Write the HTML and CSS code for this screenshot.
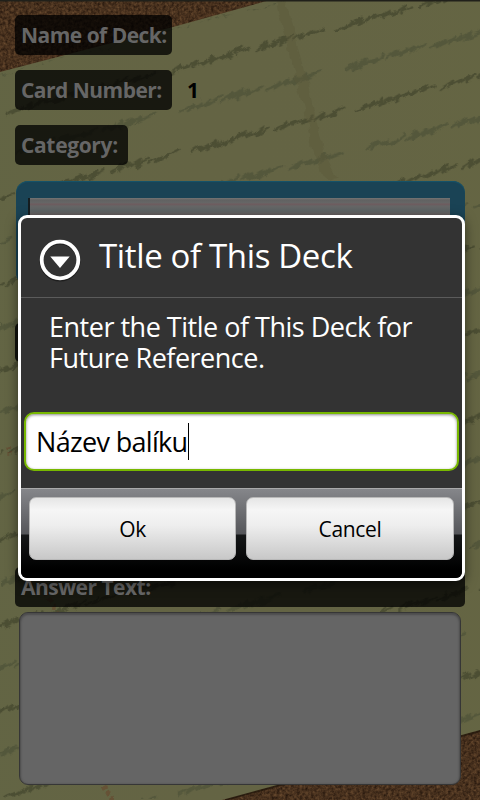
FILE: index.html
```html
<!DOCTYPE html>
<html lang="en">
<head>
<meta charset="utf-8">
<title>Title of This Deck</title>
<link rel="stylesheet" href="styles.css">
</head>
<body>
<main class="screen">
  <svg class="backdrop" width="480" height="800" viewBox="0 0 480 800" aria-hidden="true">
    <defs>
      <filter id="cork" x="0" y="0" width="100%" height="100%" color-interpolation-filters="sRGB">
        <feTurbulence type="fractalNoise" baseFrequency=".35" numOctaves="3" seed="4"/>
        <feColorMatrix values=".34 0 0 0 .11  .26 0 0 0 .06  .17 0 0 0 .03  0 0 0 0 1"/>
      </filter>
      <filter id="rough" x="0" y="0" width="480" height="800" filterUnits="userSpaceOnUse" color-interpolation-filters="sRGB">
        <feTurbulence type="fractalNoise" baseFrequency=".06 .09" numOctaves="2" seed="8"/>
        <feDisplacementMap in="SourceGraphic" scale="9" xChannelSelector="R" yChannelSelector="G"/>
        <feGaussianBlur stdDeviation=".6"/>
      </filter>
      <pattern id="ruling" width="170" height="82.6" patternUnits="userSpaceOnUse" patternTransform="translate(0 93) rotate(-14.4)">
        <g fill="none" stroke-linecap="round">
          <path stroke="#42452c" stroke-opacity=".7" stroke-width="2.2" d="M0 23l12-4-5 4 13-4-6 4 16-6-7 6 14-4M34 22l12-4-5 5 17-6-8 5 14-4-5 4 17-6-8 6 14-4M88 22l14-5-7 6 15-5-5 4 15-5-7 6 14-5M127 22l13-5-7 6 17-5-6 4 15-5"/>
          <path stroke="#464c34" stroke-opacity=".55" stroke-width="2.6" d="M0 63l15-5-9 7 18-7-8 6 17-5-7 5 16-6M42 63l14-5-8 6 18-6-9 6 16-5-6 5 18-6M90 63l15-5-9 6 18-6-7 6 16-5-8 5 17-6-6 5 20-3"/>
        </g>
      </pattern>
      <linearGradient id="shade"><stop offset="0" stop-color="#5f6744" stop-opacity=".25"/><stop offset=".5" stop-color="#656544" stop-opacity="0"/><stop offset="1" stop-color="#666840" stop-opacity=".25"/></linearGradient>
    </defs>
    <rect width="480" height="800" filter="url(#cork)"/>
    <path fill="#20150a" opacity=".7" d="M480 732L225 801V795L480 727z"/>
    <path fill="#646444" d="M0 72L173 27 270 0H480V730L222 800H0z"/>
    <path fill="url(#shade)" d="M0 72L173 27 270 0H480V730L222 800H0z"/>
    <g filter="url(#rough)">
      <path fill="url(#ruling)" d="M0 74L285 0H490V728L222 799H0z"/>
      <path fill="none" stroke="#59583a" stroke-opacity=".4" stroke-width="10" d="M280 0L294 52 308 108 318 150 332 180"/>
      <path fill="none" stroke="#693b25" stroke-opacity=".45" stroke-width="5" stroke-dasharray="4 3" d="M6 448L9 456M46 592L56 613M103 786L112 801"/>
    </g>
    <rect width="480" height="1" fill="#20201a"/>
    <rect y="1" width="480" height="1" fill="#20201a" opacity=".5"/>
  </svg>

  <section class="form">
    <div class="row"><span class="label name">Name of Deck:</span></div>
    <div class="row"><span class="label number">Card Number:</span><span class="value">1</span></div>
    <div class="row"><span class="label category">Category:</span></div>
    <div class="card"><div class="paper"></div></div>
    <div class="question-label"></div>
    <div class="answer-label">Answer Text:</div>
    <div class="answer"></div>
  </section>

  <section class="dialog" role="dialog">
    <header class="title-bar">
      <svg class="title-icon" width="46" height="46" viewBox="0 0 46 46" aria-hidden="true">
        <circle cx="23" cy="24" r="18.5" fill="none" stroke="#111" stroke-opacity=".6" stroke-width="4"/>
        <circle cx="23" cy="23" r="18.3" fill="none" stroke="#fff" stroke-width="3.8"/>
        <path fill="#fff" d="M13.3 19.5h19.4L23 31z"/>
      </svg>
      <h1 class="title">Title of This Deck</h1>
    </header>
    <p class="message">Enter the Title of This Deck for<br>Future Reference.</p>
    <div class="field"><span class="text">Název balíku</span><i class="caret"></i></div>
    <footer class="buttons">
      <button class="button">Ok</button>
      <button class="button cancel">Cancel</button>
    </footer>
  </section>
</main>
</body>
</html>
```

FILE: styles.css
```css
* { box-sizing: border-box; }
body { margin: 0; font-family: "Open Sans", "Noto Sans", sans-serif; }
.screen { position: relative; width: 480px; height: 800px; overflow: hidden; background: #636443; }
.backdrop { position: absolute; inset: 0; }

.form { position: relative; padding: 15px 15px 0; }
.row { display: flex; height: 40px; margin-bottom: 15px; }
.label, .answer-label {
  height: 40px; padding-left: 6px; border-radius: 5px;
  background: rgba(0, 0, 0, .76); color: #666;
  font-size: 21px; font-weight: 700; line-height: 40px; letter-spacing: -.52px; white-space: nowrap;
}
.name, .number { width: 157px; }
.category { width: 113px; letter-spacing: -.35px; }
.value { margin-left: 15px; color: #000; font-size: 21px; font-weight: 700; line-height: 40px; }
.card { width: 449px; height: 104px; margin: 16px 0 38px 1px; padding: 17px 15px 0 12px; border-radius: 12px; background: #1a4355; box-shadow: inset 0 1px 1px #16556b; }
.paper { height: 80px; border-left: 2px solid #151d20; background: linear-gradient(#747474 0, #626262 2px, #666 5px, #705b5e 6px, #666 8px, #5f6566 13px, #666 15px, #6e5b5e 20px, #666 22px); }
.question-label { height: 39px; margin-bottom: 205px; border-radius: 5px; background: #11120d; }
.answer-label { margin-bottom: 5px; }
.answer { width: 442px; height: 173px; margin-left: 4px; border: 1px solid #363636; border-radius: 9px; background: #656565; box-shadow: inset 0 1px 2px 1px #4c4c4c; }

.dialog {
  position: absolute; left: 18px; top: 215px; width: 447px; height: 366px;
  border: 3px solid #fff; border-radius: 9px; overflow: hidden;
  background: #333; color: #fff; box-shadow: 0 3px 12px rgba(0, 0, 0, .5);
}
.title-bar { display: flex; align-items: center; height: 80px; padding-left: 16px; border-bottom: 1px solid #5b5b5b; }
.title-icon { margin-top: 4px; }
.title { margin: -3px 0 0 16px; font-size: 33px; font-weight: 400; line-height: 44px; letter-spacing: -.36px; white-space: nowrap; }
.message { height: 114px; margin: 0; padding: 13px 0 0 28px; font-size: 27px; line-height: 31px; letter-spacing: -.49px; white-space: nowrap; }
.field {
  display: flex; align-items: center; height: 59px; margin: 0 3px 17px; padding-left: 10px;
  border: 2px solid #78b800; border-radius: 10px; background: #fff; color: #000;
  font-size: 27px; line-height: 37px; letter-spacing: -.67px; box-shadow: inset 0 1px 3px #888;
}
.caret { width: 1px; height: 37px; background: #000; }
.buttons {
  display: flex; gap: 10px; height: 90px; padding: 8px 8px 19px;
  border-top: 1px solid #a9a9aa;
  background: linear-gradient(#85868a 0, #55565a 45px, #151718 46px, #000 80px);
}
.button {
  width: 207px; height: 63px; padding: 0; border: 1px solid #b8b8b8; border-radius: 7px;
  background: linear-gradient(#e5e5e5, #f6f6f6 20%, #eee 45%, #c8c8c8);
  color: #000; font: 21px "Open Sans", "Noto Sans", sans-serif; letter-spacing: -.35px;
}
.cancel { width: 208px; }
```
